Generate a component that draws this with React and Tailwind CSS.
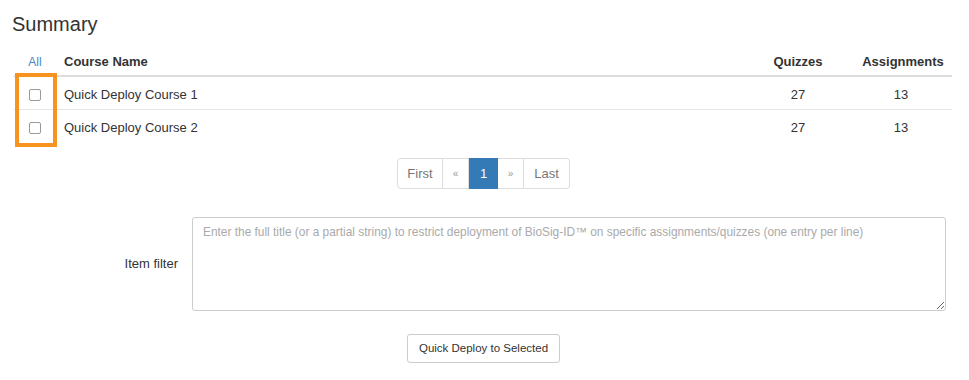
import React from "react";

const courses = [
  { id: 1, name: "Quick Deploy Course 1", quizzes: 27, assignments: 13 },
  { id: 2, name: "Quick Deploy Course 2", quizzes: 27, assignments: 13 },
];

const cols = "grid grid-cols-[42px_1fr_112px_98px]";

export default function App() {
  return (
    <div className="w-[969px] h-[380px] bg-white text-[#333] font-['Liberation_Sans',Arial,sans-serif] text-[13px] overflow-hidden">
      {/* HEADING */}
      <h2 className="pl-[12px] pt-[12px] h-[45px] text-[20px] leading-[24px] text-[#333]">Summary</h2>

      {/* TABLE */}
      <div className="relative ml-[14px] w-[938px]">
        <div className={`${cols} h-[32px] pt-[3px] items-center border-b-2 border-[#ddd]`}>
          <div className="text-center text-[#4a86c5] text-[12px]">All</div>
          <div className="pl-2 font-bold">Course Name</div>
          <div className="text-center font-bold">Quizzes</div>
          <div className="text-center font-bold">Assignments</div>
        </div>

        {courses.map((c, i) => (
          <div
            key={c.id}
            className={`${cols} items-center pt-[4px] ${i > 0 ? "border-t border-[#e5e5e5] h-[33px]" : "h-[32px]"}`}
          >
            <div className="flex justify-center -mt-[1px]">
              <span className="block w-[12px] h-[12px] rounded-[2px] border border-[#999] bg-white" />
            </div>
            <div className="pl-2">{c.name}</div>
            <div className="text-center">{c.quizzes}</div>
            <div className="text-center pr-[4px]">{c.assignments}</div>
          </div>
        ))}

        {/* highlight annotation */}
        <div className="absolute left-[1px] top-[28px] w-[42px] h-[74px] border-[4px] border-[#f7931e] pointer-events-none" />
      </div>

      {/* PAGINATION */}
      <div className="flex justify-center mt-[16px] pr-[2px]">
        <div className="flex h-[31px] text-[13px]">
          <span className="flex items-center w-[46px] justify-center border border-[#ddd] rounded-l-[4px] text-[#777]">First</span>
          <span className="flex items-center justify-center w-[26px] border border-l-0 border-[#ddd] text-[#999] text-[10px]">«</span>
          <span className="flex items-center justify-center w-[29px] bg-[#337ab7] border border-[#337ab7] text-white">1</span>
          <span className="flex items-center justify-center w-[26px] border border-l-0 border-[#ddd] text-[#999] text-[10px]">»</span>
          <span className="flex items-center justify-center w-[46px] border border-l-0 border-[#ddd] rounded-r-[4px] text-[#777]">Last</span>
        </div>
      </div>

      {/* ITEM FILTER */}
      <div className="flex items-center mt-[28px]">
        <label className="w-[178px] text-right text-[13px]">Item filter</label>
        <textarea
          className="ml-[14px] w-[754px] h-[94px] border border-[#ccc] rounded-[3px] px-[10px] py-[6px] text-[11.9px] leading-[16px] placeholder:text-[#aaa] outline-none"
          placeholder="Enter the full title (or a partial string) to restrict deployment of BioSig-ID™ on specific assignments/quizzes (one entry per line)"
        />
      </div>

      {/* ACTION */}
      <div className="flex justify-center mt-[23px] pr-[2px]">
        <button className="h-[29px] px-[11px] border border-[#ccc] rounded-[3px] bg-white text-[11.5px] text-[#333]">
          Quick Deploy to Selected
        </button>
      </div>
    </div>
  );
}
